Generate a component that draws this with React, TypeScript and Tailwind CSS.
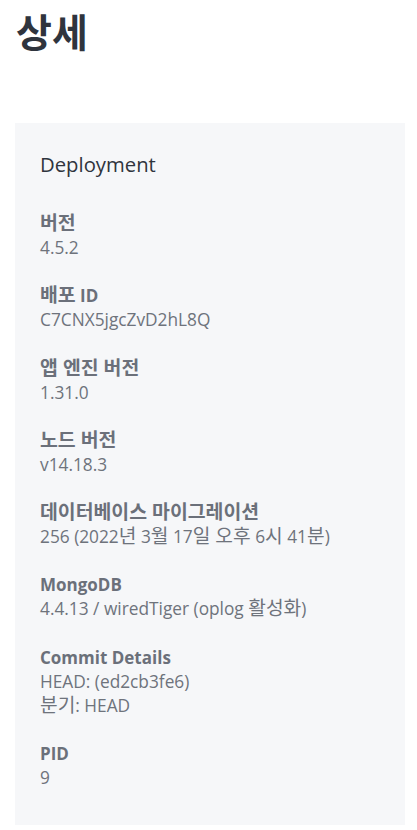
import React from "react";

const items: { label: string; values: string[] }[] = [
  { label: "버전", values: ["4.5.2"] },
  { label: "배포 ID", values: ["C7CNX5jgcZvD2hL8Q"] },
  { label: "앱 엔진 버전", values: ["1.31.0"] },
  { label: "노드 버전", values: ["v14.18.3"] },
  { label: "데이터베이스 마이그레이션", values: ["256 (2022년 3월 17일 오후 6시 41분)"] },
  { label: "MongoDB", values: ["4.4.13 / wiredTiger (oplog 활성화)"] },
  { label: "Commit Details", values: ["HEAD: (ed2cb3fe6)", "분기: HEAD"] },
  { label: "PID", values: ["9"] },
];

function T({ text, k }: { text: string; k: "label" | "value" }) {
  const parts = text.split(/([\uAC00-\uD7A3]+(?: [\uAC00-\uD7A3]+)*)/);
  return (
    <>
      {parts.map((p, i) =>
        /[\uAC00-\uD7A3]/.test(p) ? (
          <span
            key={i}
            className={k === "label" ? "text-[19.4px] leading-[0px]" : "text-[19.2px] leading-[0px]"}
          >
            {p}
          </span>
        ) : (
          <React.Fragment key={i}>{p}</React.Fragment>
        )
      )}
    </>
  );
}

export default function App() {
  return (
    <div
      className="w-[417px] h-[830px] bg-white"
      style={{ fontFamily: '"Open Sans", "Noto Sans CJK KR", sans-serif' }}
    >
      <h1 className="pl-[16px] pt-[8px] text-[39px] leading-[48px] font-bold text-[#2f343d]">
        상세
      </h1>
      <div className="ml-[15px] w-[390px] mt-[67px] h-[702px] bg-[#f6f7f9] px-[25px] pt-[26px]">
        <h2 className="text-[20.3px] leading-[30px] font-medium text-[#2f343d]">Deployment</h2>
        <div className="mt-[33px] flex flex-col gap-[24.3px]">
          {items.map((it) => (
            <div key={it.label} className="flex flex-col">
              <div className="h-[24px] text-[17px] leading-[24px] font-bold text-[#6b707a]">
                <T text={it.label} k="label" />
              </div>
              {it.values.map((v) => (
                <div key={v} className="h-[24px] text-[17.3px] leading-[24px] text-[#6e737c]">
                  <T text={v} k="value" />
                </div>
              ))}
            </div>
          ))}
        </div>
      </div>
    </div>
  );
}
